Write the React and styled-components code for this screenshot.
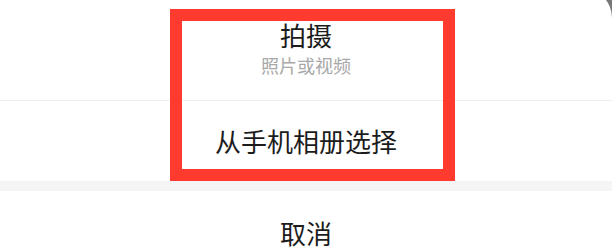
import React from 'react';
import styled, { createGlobalStyle } from 'styled-components';

const GlobalStyle = createGlobalStyle`
    html, body {
        margin: 0;
        padding: 0;
        background: #777;
    }
    body {
        font-family: "Noto Sans CJK SC", "Noto Sans", sans-serif;
    }
`;

const Page = styled.div`
    position: relative;
    width: 612px;
    height: 250px;
    overflow: hidden;
    background: #777;
`;

const Sheet = styled.div`
    margin: -12px 0 0 -40px;
    padding-left: 40px;
    background: #fff;
    border-radius: 30px 30px 0 0;
    display: flex;
    flex-direction: column;
`;

const Option = styled.div`
    display: flex;
    flex-direction: column;
    align-items: center;
    justify-content: center;
    height: ${p => p.height}px;
    padding-top: ${p => p.top || 0}px;
    box-sizing: border-box;
    border-bottom: ${p => (p.divided ? '1px solid #efefef' : 'none')};
`;

const Label = styled.div`
    font-size: 26px;
    line-height: 30px;
    color: #1c1c1c;
`;

const Hint = styled.div`
    margin-top: 4px;
    font-size: 18px;
    line-height: 22px;
    color: #a8a8a8;
`;

const Gap = styled.div`
    height: 10px;
    background: #f5f5f5;
`;

const Highlight = styled.div`
    position: absolute;
    left: 170px;
    top: 9px;
    width: 285px;
    height: 172px;
    box-sizing: border-box;
    border: 12px solid #ff3a2f;
    pointer-events: none;
`;

const App = () => {
    return (
        <Page>
            <GlobalStyle />
            <Sheet>
                <Option height={113} top={7} divided>
                    <Label>拍摄</Label>
                    <Hint>照片或视频</Hint>
                </Option>
                <Option height={80}>
                    <Label>从手机相册选择</Label>
                </Option>
                <Gap />
                <Option height={84}>
                    <Label>取消</Label>
                </Option>
            </Sheet>
            <Highlight />
        </Page>
    );
};

export default App;
